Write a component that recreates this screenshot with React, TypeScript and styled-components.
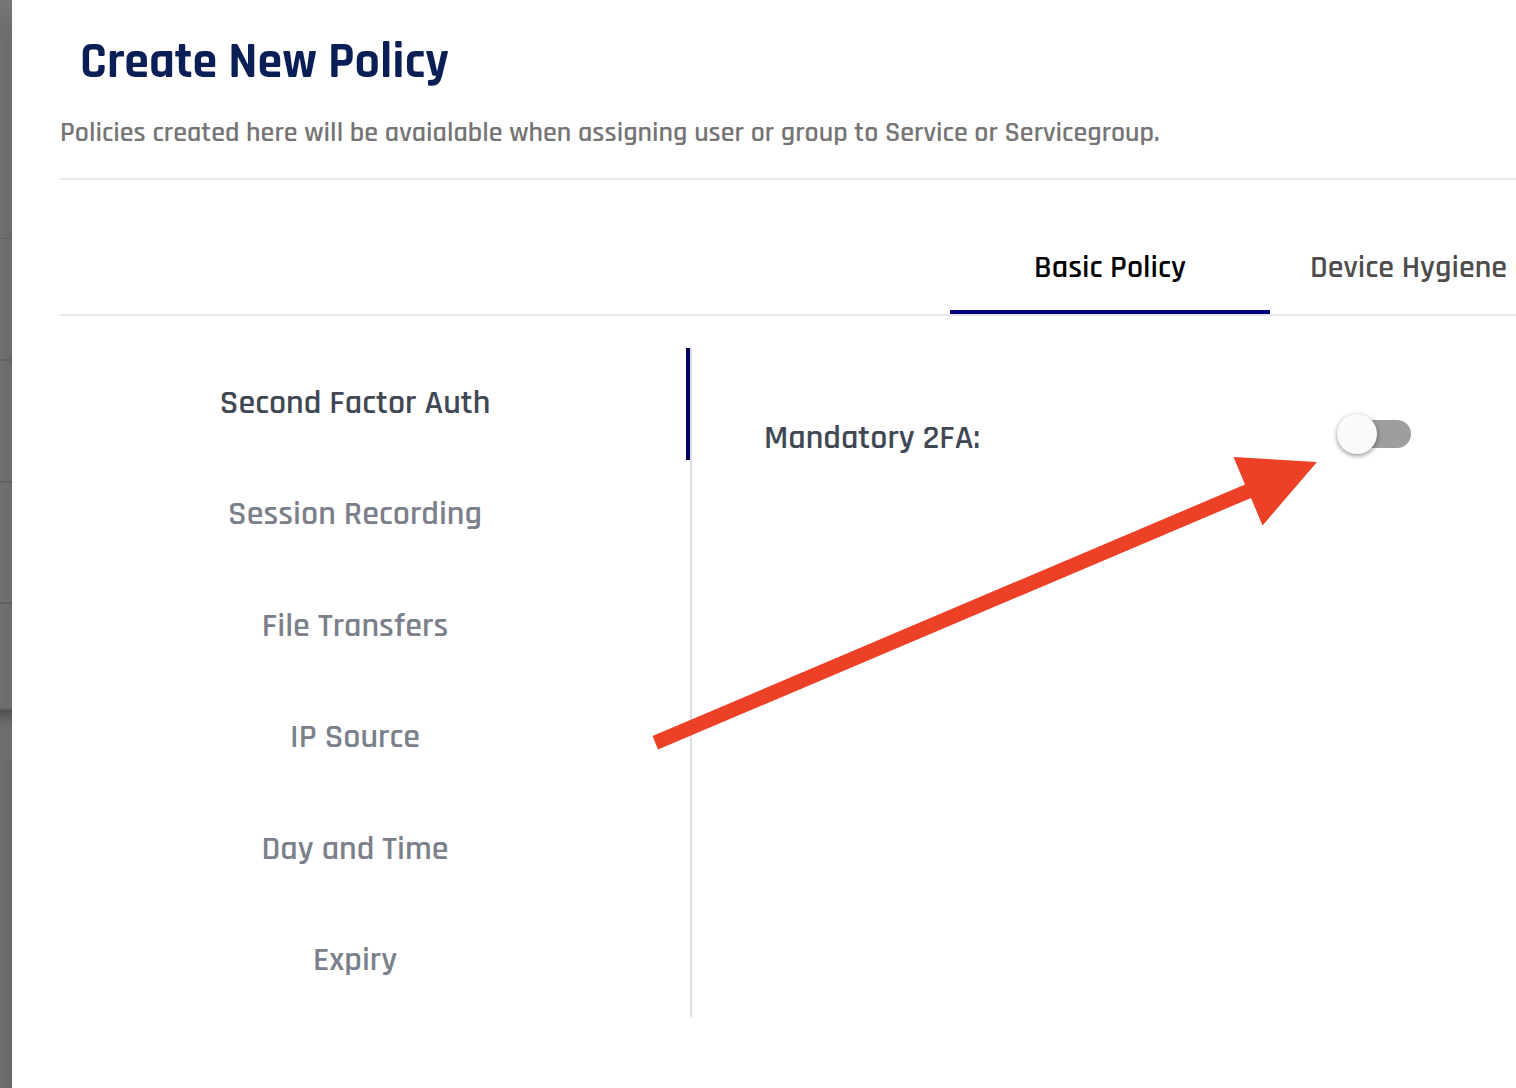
import React, { useState } from "react";
import styled, { createGlobalStyle } from "styled-components";

const GlobalStyle = createGlobalStyle`
  * { box-sizing: border-box; }
  body {
    margin: 0;
    background: #fff;
    font-family: Rajdhani, Roboto, "Liberation Sans", sans-serif;
    overflow: hidden;
  }
  button { font-family: inherit; }
`;

const Page = styled.div`
  display: flex;
  min-height: 100vh;
  position: relative;
`;

const Backdrop = styled.aside`
  flex: 0 0 12px;
  display: flex;
  flex-direction: column;
  background: linear-gradient(to right, #6d6d6d, #686868);
`;

const BackdropRow = styled.div<{ $height: number; $line?: number }>`
  height: ${(p) => p.$height}px;
  background: linear-gradient(to right, #707070, #6b6b6b);
  border-bottom: ${(p) => p.$line ?? 2}px solid #606060;
`;

const BackdropHeader = styled.div`
  height: 35px;
  background: linear-gradient(#777, #6c6c6c);
`;

const BackdropShadow = styled.div`
  height: 48px;
  background: linear-gradient(#505050, #696969 12px, #6e6e6e 20px);
`;

const Dialog = styled.main`
  flex: 1;
  min-width: 0;
  overflow: hidden;
  background: #fff;
`;

const Header = styled.header`
  margin-left: 48px;
  height: 180px;
  padding-top: 34px;
  border-bottom: 2px solid #ebebeb;
`;

const Title = styled.h1`
  margin: 0 0 24px 20px;
  font-size: 50px;
  line-height: 56px;
  font-weight: 700;
  color: #0a1f56;
`;

const Subtitle = styled.p`
  margin: 0;
  font-size: 28px;
  line-height: 38px;
  font-weight: 600;
  color: #757575;
  white-space: nowrap;
`;

const TabBar = styled.div`
  display: flex;
  margin-left: 48px;
  padding: 40px 0 0 890px;
  border-bottom: 2px solid #e8e8e8;
  overflow: hidden;
`;

const Tab = styled.button<{ $active: boolean }>`
  flex: 0 0 auto;
  min-width: 320px;
  height: 94px;
  padding: 6px 40px 0;
  border: 0;
  border-bottom: 4px solid ${(p) => (p.$active ? "#000080" : "transparent")};
  background: none;
  color: ${(p) => (p.$active ? "#000" : "#4d4d4d")};
  font-size: 32px;
  line-height: 36px;
  font-weight: 600;
  white-space: nowrap;
`;

const Body = styled.div`
  display: flex;
  padding: 32px 0 0 8px;
`;

const Nav = styled.nav`
  flex: 0 0 672px;
  min-height: 669px;
  display: grid;
  grid-auto-rows: 1fr;
  border-right: 2px solid #dedede;
`;

const NavItem = styled.button<{ $active: boolean }>`
  padding: 0 0 2px;
  border: 0;
  border-left: 4px solid transparent;
  border-right: 4px solid ${(p) => (p.$active ? "#000066" : "transparent")};
  background: none;
  color: ${(p) => (p.$active ? "#404854" : "#7b808a")};
  font-size: 34px;
  line-height: 36px;
  font-weight: 600;
`;

const Content = styled.section`
  flex: 1;
  padding: 66px 72px;
`;

const Setting = styled.label`
  display: grid;
  grid-template-columns: 573px auto;
  align-items: center;
  height: 48px;
  color: #404854;
  font-size: 34px;
  line-height: 36px;
  font-weight: 600;
  justify-content: start;
`;

const Switch = styled.input`
  appearance: none;
  display: flex;
  align-items: center;
  width: 74px;
  height: 28px;
  margin: 0 0 8px;
  border-radius: 14px;
  background: linear-gradient(to right, transparent 20px, #9e9e9e 20px);

  &::before {
    content: "";
    width: 40px;
    height: 40px;
    flex: none;
    border-radius: 50%;
    background: #fafafa;
    box-shadow: 0 2px 4px rgba(0, 0, 0, 0.3), 0 1px 6px rgba(0, 0, 0, 0.15);
  }

  &:checked::before {
    margin-left: 34px;
  }
`;

const Arrow = styled.svg`
  position: absolute;
  left: 652px;
  top: 456px;
  width: 666px;
  height: 294px;
  pointer-events: none;
`;

const tabs = ["Basic Policy", "Device Hygiene and"];
const sections = [
  "Second Factor Auth",
  "Session Recording",
  "File Transfers",
  "IP Source",
  "Day and Time",
  "Expiry",
];

export default function App() {
  const [tab, setTab] = useState(0);
  const [section, setSection] = useState(0);
  return (
    <Page>
      <GlobalStyle />
      <Backdrop>
        <BackdropHeader />
        <BackdropRow $height={204} $line={1} />
        <BackdropRow $height={122} />
        <BackdropRow $height={122} />
        <BackdropRow $height={121} />
        <BackdropRow $height={106} />
        <BackdropShadow />
      </Backdrop>
      <Dialog>
        <Header>
          <Title>Create New Policy</Title>
          <Subtitle>
            Policies created here will be avaialable when assigning user or
            group to Service or Servicegroup.
          </Subtitle>
        </Header>
        <TabBar role="tablist">
          {tabs.map((name, i) => (
            <Tab
              key={name}
              role="tab"
              aria-selected={i === tab}
              $active={i === tab}
              onClick={() => setTab(i)}
            >
              {name}
            </Tab>
          ))}
        </TabBar>
        <Body>
          <Nav>
            {sections.map((name, i) => (
              <NavItem
                key={name}
                $active={i === section}
                onClick={() => setSection(i)}
              >
                {name}
              </NavItem>
            ))}
          </Nav>
          <Content>
            <Setting htmlFor="mandatory-2fa">
              Mandatory 2FA:
              <Switch id="mandatory-2fa" type="checkbox" />
            </Setting>
          </Content>
        </Body>
      </Dialog>
      <Arrow viewBox="652 456 666 294" aria-hidden="true">
        <path
          d="M652.5 736 L1245 484.5 L1233.5 457 L1317 462 L1262.5 525.5 L1251 498 L658 749.5 Z"
          fill="#ec4027"
        />
      </Arrow>
    </Page>
  );
}
